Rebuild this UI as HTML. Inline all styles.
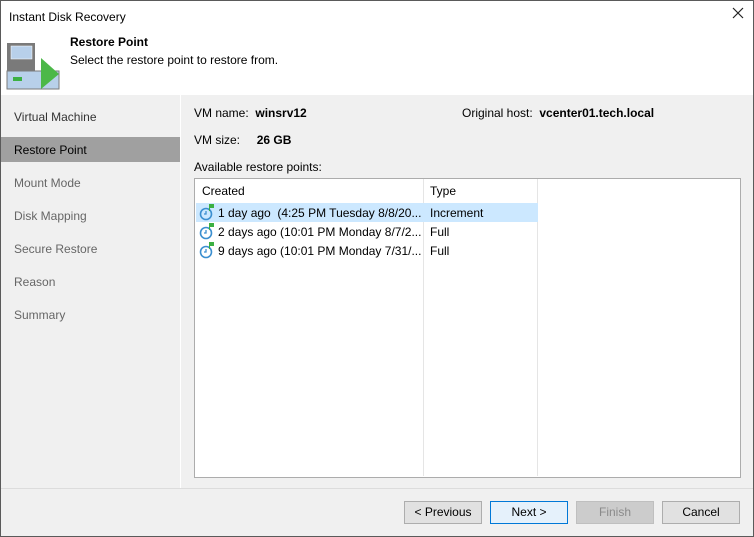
<!DOCTYPE html><html><head><style>
body{margin:0;width:754px;height:537px;overflow:hidden;font-family:"Liberation Sans",sans-serif;font-size:12px;color:#000}
.win{position:absolute;left:0;top:0;width:754px;height:537px;background:#f0f0f0}
.abs{position:absolute}
.nav{left:14px;color:#333}
.btn{position:absolute;top:501px;width:76px;height:21px;border:1px solid #adadad;background:#e1e1e1;text-align:center;line-height:21px}
</style></head><body><div class="win">
<div class="abs" style="left:0;top:0;width:754px;height:95px;background:#fff"></div>
<div class="abs" style="left:9px;top:10px;font-size:12px">Instant Disk Recovery</div>
<svg class="abs" style="left:732px;top:7px" width="12" height="12"><path d="M1 1L11 11M11 1L1 11" stroke="#222" stroke-width="1.2"/></svg>
<svg class="abs" style="left:6px;top:42px" width="54" height="48">
<rect x="1" y="1" width="28" height="28" fill="#7a7a7a"/><rect x="5" y="4" width="21" height="13" fill="#b8d0ea" stroke="#fff" stroke-width="0.5"/>
<rect x="1" y="29" width="52" height="18" fill="#b8d0ea" stroke="#7a7a7a"/><rect x="7" y="35" width="9" height="4" fill="#3cb043"/>
<polygon points="35,16 53,32 35,47" fill="#4cb848"/></svg>
<div class="abs" style="left:70px;top:35px;font-weight:bold">Restore Point</div>
<div class="abs" style="left:70px;top:53px">Select the restore point to restore from.</div>
<div class="abs" style="left:180px;top:95px;width:1px;height:393px;background:#fff"></div>
<div class="abs" style="left:0;top:137px;width:180px;height:25px;background:#a0a0a0"></div>
<div class="abs nav" style="top:110px">Virtual Machine</div>
<div class="abs nav" style="top:143px;color:#000">Restore Point</div>
<div class="abs nav" style="top:176px;color:#666">Mount Mode</div>
<div class="abs nav" style="top:209px;color:#666">Disk Mapping</div>
<div class="abs nav" style="top:242px;color:#666">Secure Restore</div>
<div class="abs nav" style="top:275px;color:#666">Reason</div>
<div class="abs nav" style="top:308px;color:#666">Summary</div>
<div class="abs" style="left:194px;top:106px">VM name:&nbsp; <b>winsrv12</b></div>
<div class="abs" style="left:462px;top:106px">Original host:&nbsp; <b>vcenter01.tech.local</b></div>
<div class="abs" style="left:194px;top:133px">VM size:&nbsp;&nbsp;&nbsp;&nbsp; <b>26 GB</b></div>
<div class="abs" style="left:194px;top:160px">Available restore points:</div>
<div class="abs" style="left:194px;top:178px;width:545px;height:298px;background:#fff;border:1px solid #acacac"></div>
<div class="abs" style="left:423px;top:179px;width:1px;height:297px;background:#e5e5e5"></div>
<div class="abs" style="left:537px;top:179px;width:1px;height:297px;background:#e5e5e5"></div>
<div class="abs" style="left:202px;top:184px">Created</div><div class="abs" style="left:430px;top:184px">Type</div>
<div class="abs" style="left:196px;top:203px;width:342px;height:19px;background:#cce8ff"></div>
<div class="abs" style="left:218px;top:206px">1 day ago&nbsp; (4:25 PM Tuesday 8/8/20...</div><div class="abs" style="left:430px;top:206px">Increment</div>
<div class="abs" style="left:218px;top:225px">2 days ago (10:01 PM Monday 8/7/2...</div><div class="abs" style="left:430px;top:225px">Full</div>
<div class="abs" style="left:218px;top:244px">9 days ago (10:01 PM Monday 7/31/...</div><div class="abs" style="left:430px;top:244px">Full</div>
<svg class="abs" style="left:199px;top:203px" width="18" height="58">
<g id="c"><circle cx="7" cy="11" r="5.5" fill="none" stroke="#3b8fd0" stroke-width="1.6"/><path d="M7 8v3h-2" stroke="#3b8fd0" fill="none" stroke-width="1.3"/><rect x="10" y="1" width="5" height="4" fill="#3cb043"/><rect x="10" y="1" width="1" height="7" fill="#3cb043"/></g>
<use href="#c" y="19"/><use href="#c" y="38"/></svg>
<div class="abs" style="left:0;top:488px;width:754px;height:1px;background:#dcdcdc"></div>
<div class="btn" style="left:404px">&lt; Previous</div>
<div class="btn" style="left:490px;background:#e5f1fb;border-color:#0078d7">Next &gt;</div>
<div class="btn" style="left:576px;background:#ccc;border-color:#bfbfbf;color:#8a8a8a">Finish</div>
<div class="btn" style="left:662px">Cancel</div>
<div class="abs" style="left:0;top:0;width:752px;height:535px;border:1px solid #5a5a5a"></div>
</div></body></html>
